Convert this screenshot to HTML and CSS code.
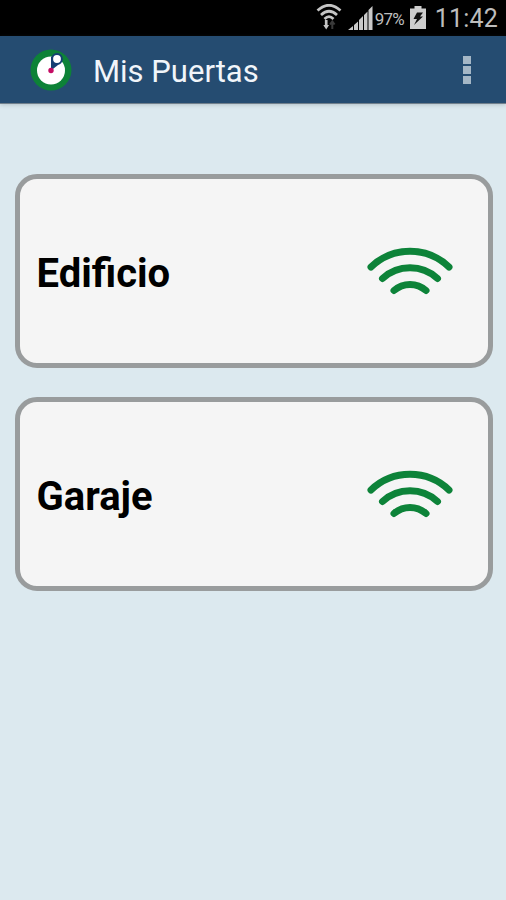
FILE: index.html
```
<!DOCTYPE html>
<html lang="es">

<head>
	<meta charset="UTF-8">
	<meta name="viewport" content="width=device-width, initial-scale=1.0">
	<title>Mis Puertas</title>
	<link rel="stylesheet" href="styles.css">
</head>

<body>
	<div class="status-bar">
		<svg class="status-wifi" width="26" height="28" viewBox="0 0 26 28" fill="none" stroke="#c4c4c4" stroke-width="2.7">
			<path d="M1.5 6.500Q13 -4 24.500 6.500" />
			<path d="M5 11Q13 3.500 21 11" />
			<path d="M8.500 15Q13 10.500 17.500 15" />
			<path d="M10.200 16v7" />
			<path d="M7.300 21h5.800l-2.900 4.500z" fill="#c4c4c4" stroke="none" />
			<path d="M16.300 19v6M14 20.500l2.300-3 2.300 3" stroke="#3a3a3a" stroke-width="2" />
		</svg>
		<svg class="status-signal" width="25" height="25" viewBox="0 0 25 25" fill="#c9c9c9">
			<path d="M0 24l5-4v4zM6 19l4-3.500V24H6zM11 14l4-4v14h-4zM16 9l3.500-3.500V24H16zM20.500 4L24.500 0v24h-4z" />
		</svg>
		<span class="battery-level">97%</span>
		<svg class="status-battery" width="16" height="23" viewBox="0 0 16 23">
			<path d="M4.500 0h7v2.500H16V23H0V2.500h4.500z" fill="#cdcdcd" />
			<path d="M7 6.500h6l-3 4h3L4 19l3-6H3.500z" fill="#111" />
		</svg>
		<span class="clock">11:42</span>
	</div>

	<header class="toolbar">
		<svg class="logo" width="42" height="42" viewBox="0 0 42 42">
			<circle cx="21" cy="21" r="20.500" fill="#0d8237" />
			<circle cx="21" cy="21.500" r="14" fill="#fff" />
			<path d="M21 21.500V8l5-3 5 7-3 4z" fill="#143f72" />
			<circle cx="27" cy="10" r="4.900" fill="#fff" stroke="#143f72" stroke-width="2" />
			<circle cx="21" cy="21.500" r="2.700" fill="#c40c63" />
		</svg>
		<h1 class="title">Mis Puertas</h1>
		<div class="menu">
			<span class="menu-dot"></span>
			<span class="menu-dot"></span>
			<span class="menu-dot"></span>
		</div>
	</header>

	<main class="doors">
		<div class="door">
			<span class="door-name">Edificio</span>
			<svg class="door-signal" width="86" height="48" viewBox="0 0 86 48">
				<path d="M4 20A56.300 56.300 0 0 1 82 20" />
				<path d="M15.500 31.500A40.700 40.700 0 0 1 70.500 31.500" />
				<path d="M27 43.500A24 24 0 0 1 59 43.500" />
			</svg>
		</div>
		<div class="door">
			<span class="door-name">Garaje</span>
			<svg class="door-signal" width="86" height="48" viewBox="0 0 86 48">
				<path d="M4 20A56.300 56.300 0 0 1 82 20" />
				<path d="M15.500 31.500A40.700 40.700 0 0 1 70.500 31.500" />
				<path d="M27 43.500A24 24 0 0 1 59 43.500" />
			</svg>
		</div>
	</main>
</body>

</html>
```
FILE: styles.css
```
* {
	box-sizing: border-box;
}

body {
	margin: 0;
	min-height: 100vh;
	background: #dce9ef;
	font-family: Roboto, "Liberation Sans", sans-serif;
}

.status-bar {
	display: flex;
	align-items: flex-start;
	justify-content: flex-end;
	height: 36px;
	padding-right: 8px;
	background: #000;
	color: #bdbdbd;
}

.status-wifi {
	margin: 4px 6px 0 0;
}

.status-signal {
	margin: 6px 2px 0 0;
}

.battery-level {
	width: 31px;
	margin: 9px 4px 0 0;
	font-size: 17px;
	line-height: 20px;
	letter-spacing: -0.8px;
	white-space: nowrap;
}

.status-battery {
	margin: 6px 9px 0 0;
}

.clock {
	font-size: 25px;
	line-height: 37px;
	letter-spacing: 0.2px;
}

.toolbar {
	display: flex;
	align-items: center;
	height: 68px;
	padding: 0 35px 0 30px;
	background: #254c71;
	border-bottom: 1px solid #71808c;
	box-shadow: 0 1px 4px rgba(60, 80, 95, 0.25);
}

.logo {
	margin-right: 21px;
}

.title {
	flex: 1;
	margin: 4px 0 0;
	color: #f1f5fa;
	font-size: 31px;
	font-weight: 400;
	line-height: 36px;
}

.menu {
	display: flex;
	flex-direction: column;
	gap: 2px;
}

.menu-dot {
	width: 8px;
	height: 8px;
	background: #a5b7c6;
}

.doors {
	display: flex;
	flex-direction: column;
	gap: 29px;
	padding: 70px 13.500px 0 15px;
}

.door {
	display: flex;
	align-items: center;
	justify-content: space-between;
	height: 194px;
	padding: 0 34.500px 0 16.500px;
	background: #f5f5f5;
	border: 5px solid #999c9d;
	border-radius: 22px;
}

.door-name {
	margin-top: 5px;
	color: #000;
	font-size: 40px;
	font-weight: 700;
	line-height: 48px;
}

.door-signal {
	fill: none;
	stroke: #0d8339;
	stroke-width: 7;
	stroke-linecap: round;
}
```
